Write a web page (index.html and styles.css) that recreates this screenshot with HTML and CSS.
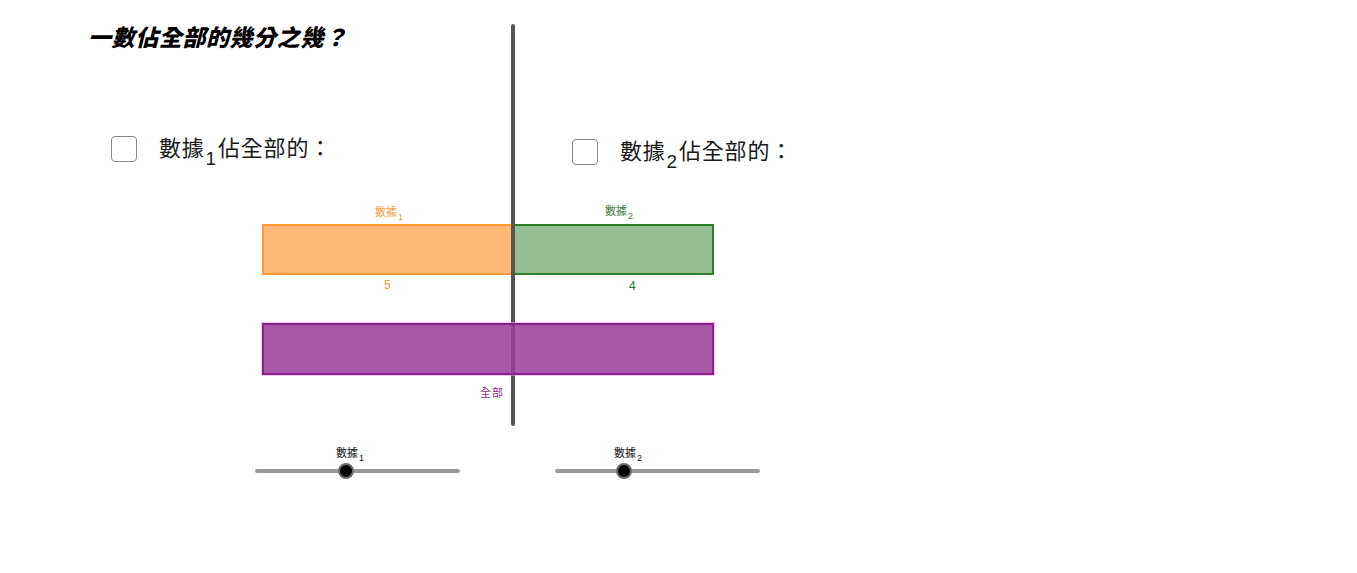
FILE: index.html
```html
<!DOCTYPE html>
<html lang="zh-Hant">
<head>
<meta charset="utf-8">
<title>一數佔全部的幾分之幾？</title>
<link rel="stylesheet" href="styles.css">
</head>
<body>
<div class="canvas">
  <h1 class="title">一數佔全部的幾分之幾？</h1>

  <label class="check check-1"><span class="box"></span><span class="check-text">數據<sub>1</sub>佔全部的：</span></label>
  <label class="check check-2"><span class="box"></span><span class="check-text">數據<sub>2</sub>佔全部的：</span></label>

  <div class="bar bar-orange"></div>
  <div class="bar bar-green"></div>
  <div class="divider"></div>
  <div class="bar bar-purple"></div>

  <span class="lbl lbl-orange lbl-d1">數據<sub>1</sub></span>
  <span class="num num-orange num-5">5</span>
  <span class="lbl lbl-green lbl-d2">數據<sub>2</sub></span>
  <span class="num num-green num-4">4</span>
  <span class="lbl lbl-purple lbl-all">全部</span>

  <div class="slider slider-1">
    <span class="lbl lbl-dark slider-label s1-label">數據<sub>1</sub></span>
    <div class="track"></div>
    <div class="knob s1-knob"></div>
  </div>
  <div class="slider slider-2">
    <span class="lbl lbl-dark slider-label s2-label">數據<sub>2</sub></span>
    <div class="track"></div>
    <div class="knob s2-knob"></div>
  </div>
</div>
</body>
</html>
```

FILE: styles.css
```css
html, body {
  margin: 0;
  padding: 0;
  background: #ffffff;
}

.canvas {
  position: relative;
  width: 1357px;
  height: 573px;
  overflow: hidden;
  background: #ffffff;
  font-family: "Noto Sans CJK TC", "Noto Sans CJK SC", sans-serif;
}

.title {
  position: absolute;
  left: 88px;
  top: 22px;
  margin: 0;
  font-size: 23px;
  line-height: 28px;
  font-weight: 900;
  font-style: italic;
  color: #000;
  letter-spacing: 0.6px;
}

.check {
  position: absolute;
  display: flex;
  align-items: flex-start;
  gap: 22px;
}
.check-1 { left: 111px; top: 136px; }
.check-2 { left: 572px; top: 139px; }

.box {
  width: 24px;
  height: 24px;
  border: 1.5px solid #8a8a8a;
  border-radius: 4px;
  background: #fff;
  flex: none;
}

.check-text {
  margin-top: -3px;
  font-size: 22px;
  line-height: 26px;
  color: #1a1a1a;
  font-weight: 400;
  letter-spacing: 0.8px;
  white-space: nowrap;
}
.check-text sub {
  font-family: "Liberation Sans", Arial, sans-serif;
  font-size: 19px;
  vertical-align: -9px;
  line-height: 0;
  margin: 0 1px;
}

.bar {
  position: absolute;
  box-sizing: border-box;
}
.bar-orange {
  left: 262px;
  top: 224px;
  width: 252px;
  height: 51px;
  background: #ffb977;
  border: 2px solid #ff9a30;
}
.bar-green {
  left: 513px;
  top: 224px;
  width: 201px;
  height: 51px;
  background: #94bf93;
  border: 2px solid #2f7f2a;
}
.bar-purple {
  left: 262px;
  top: 323px;
  width: 452px;
  height: 52px;
  background: rgba(152, 60, 152, 0.85);
  border: 2px solid #8d1f8d;
  box-shadow: 0 0 0 1px rgba(230, 160, 230, 0.6);
}

.divider {
  position: absolute;
  left: 511px;
  top: 24px;
  width: 4px;
  height: 402px;
  border-radius: 2px;
  background: #555555;
}

.lbl {
  position: absolute;
  font-size: 11px;
  line-height: 12px;
  white-space: nowrap;
}
.lbl sub {
  font-family: "Liberation Sans", Arial, sans-serif;
  font-size: 9px;
  vertical-align: -4px;
  line-height: 0;
  margin-left: 1px;
}
.lbl-orange { color: #f09a3c; }
.lbl-green { color: #3d7a36; }
.lbl-purple { color: #8a2a8a; }
.lbl-dark { color: #111; }

.lbl-d1 { left: 375px; top: 205px; }
.lbl-d2 { left: 605px; top: 204px; }
.lbl-all { left: 480px; top: 386px; letter-spacing: 1px; }

.num {
  position: absolute;
  font-family: "Liberation Sans", Arial, sans-serif;
  font-size: 12px;
  line-height: 12px;
}
.num-orange { color: #f09a3c; }
.num-green { color: #2f6f2a; }
.num-5 { left: 384px; top: 279px; }
.num-4 { left: 629px; top: 280px; }

.slider {
  position: absolute;
  width: 205px;
  height: 30px;
}
.slider-1 { left: 255px; top: 446px; }
.slider-2 { left: 555px; top: 446px; }

.slider-label { top: 0; }
.s1-label { left: 81px; }
.s2-label { left: 59px; }

.track {
  position: absolute;
  left: 0;
  top: 23px;
  width: 205px;
  height: 4px;
  border-radius: 2px;
  background: #999999;
}
.knob {
  position: absolute;
  top: 17px;
  width: 12px;
  height: 12px;
  border-radius: 50%;
  background: #000;
  border: 2px solid #6e6e6e;
}
.s1-knob { left: 83px; }
.s2-knob { left: 61px; }
```
